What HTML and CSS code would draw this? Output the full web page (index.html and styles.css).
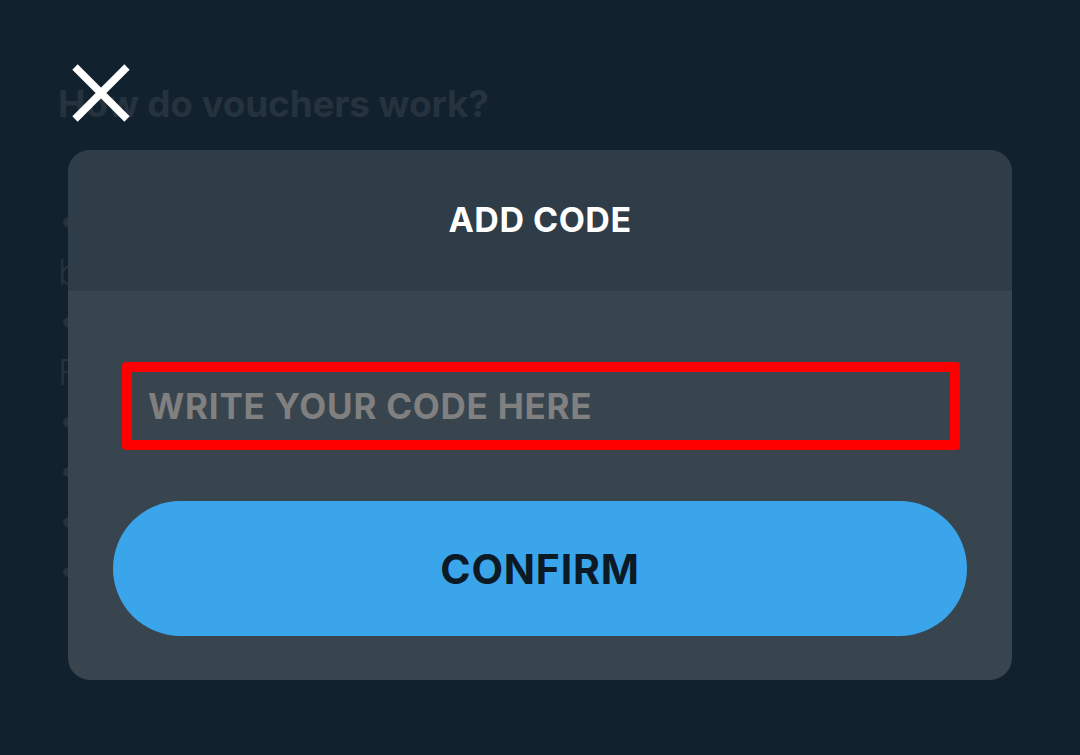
FILE: index.html
```html
<!DOCTYPE html>
<html lang="en">
<head>
<meta charset="utf-8">
<title>Add code</title>
<link rel="stylesheet" href="styles.css">
</head>
<body>
<main class="page">
  <h1 class="page-title">How do vouchers work?</h1>
  <div class="rules">
    <p class="rule">• Vouchers are valid for 30 days and can<br>be redeemed once per account</p>
    <p class="rule">• Rewards are added to your account.<br>Free spins are credited instantly</p>
    <p class="rule">• Codes are not case sensitive</p>
    <p class="rule">• Vouchers cannot be exchanged for cash</p>
    <p class="rule">• Only one code can be used at a time</p>
    <p class="rule">• Contact support if your code fails</p>
  </div>
</main>

<button class="close" aria-label="Close">
  <svg width="58" height="58" viewBox="0 0 58 58"><path d="M3 3 L55 55 M55 3 L3 55" stroke="#ffffff" stroke-width="7.5" fill="none"/></svg>
</button>

<section class="modal">
  <header class="modal-head">
    <h2 class="modal-title">ADD CODE</h2>
  </header>
  <div class="modal-body">
    <input class="code-input" type="text" placeholder="WRITE YOUR CODE HERE">
    <button class="confirm">CONFIRM</button>
  </div>
</section>
</body>
</html>
```
FILE: styles.css
```css
html, body {
  margin: 0;
  padding: 0;
  height: 100%;
}
body {
  background: #11212d;
  font-family: Inter, "Noto Sans", sans-serif;
  overflow: hidden;
}
.page {
  padding: 76px 0 0 58px;
  width: 940px;
  color: #26333e;
}
.page-title {
  margin: 0;
  font-size: 37px;
  font-weight: 700;
  line-height: 56px;
  letter-spacing: -0.2px;
}
.rules {
  margin-top: 65px;
}
.rule {
  margin: 0;
  font-size: 35px;
  font-weight: 300;
  line-height: 50px;
  padding-left: 0;
}
.close {
  position: absolute;
  left: 72px;
  top: 64px;
  width: 58px;
  height: 58px;
  padding: 0;
  border: 0;
  background: none;
  z-index: 2;
}
.close svg {
  display: block;
}
.modal {
  position: absolute;
  left: 68px;
  top: 150px;
  width: 944px;
  height: 530px;
  border-radius: 22px;
  overflow: hidden;
  background: #38454f;
  display: flex;
  flex-direction: column;
}
.modal-head {
  height: 141px;
  background: #2e3d48;
  display: flex;
  align-items: center;
  justify-content: center;
}
.modal-title {
  margin: 0;
  color: #ffffff;
  font-size: 34px;
  font-weight: 700;
  letter-spacing: 0.5px;
  padding-bottom: 2px;
}
.modal-body {
  display: flex;
  flex-direction: column;
  padding: 71px 0 0 0;
}
.code-input {
  box-sizing: border-box;
  margin: 0 52px 0 54px;
  height: 88px;
  border: 10px solid #ff0000;
  border-radius: 4px;
  background: #38454f;
  padding: 0 0 0 16px;
  font-family: Inter, "Noto Sans", sans-serif;
  font-size: 35px;
  font-weight: 700;
  letter-spacing: 0.75px;
  color: #ffffff;
  outline: none;
}
.code-input::placeholder {
  color: #808080;
  opacity: 1;
}
.confirm {
  margin: 51px 45px 0 45px;
  height: 135px;
  border: 0;
  border-radius: 68px;
  background: #3ba5ec;
  color: #0b1a24;
  font-family: Inter, "Noto Sans", sans-serif;
  font-size: 41px;
  font-weight: 700;
  letter-spacing: 0.8px;
  padding: 0;
}
```
